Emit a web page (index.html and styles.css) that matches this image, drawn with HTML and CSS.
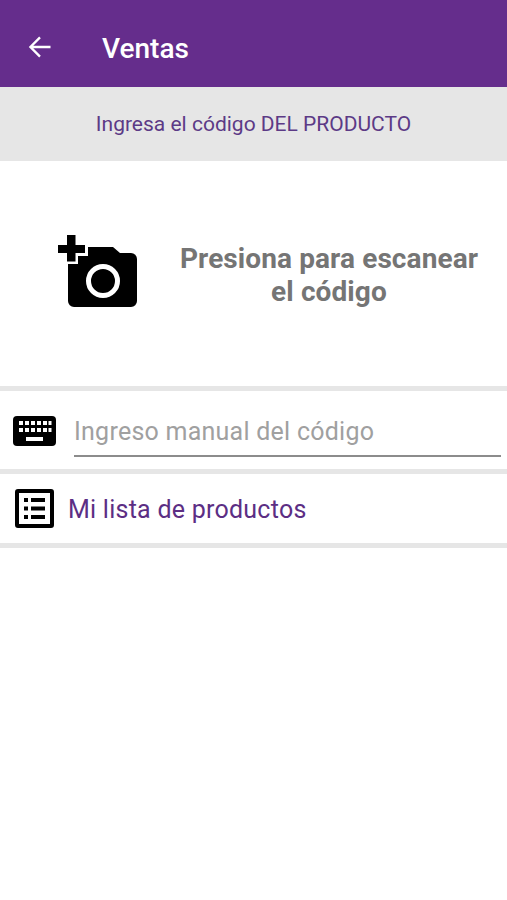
FILE: index.html
```html
<!DOCTYPE html>
<html lang="es">
<head>
<meta charset="utf-8">
<title>Ventas</title>
<link rel="stylesheet" href="styles.css">
</head>
<body>
<header class="appbar">
  <svg class="back" viewBox="0 0 24 24" aria-hidden="true"><path d="M21 12H4M12 3.800 3.800 12l8.200 8.200" fill="none" stroke="#fff" stroke-width="2"/></svg>
  <h1 class="title">Ventas</h1>
</header>
<div class="band">Ingresa el código DEL PRODUCTO</div>
<section class="scan">
  <svg class="cam" viewBox="0 0 82 74" aria-hidden="true">
    <path d="M11 29h10v-8h10v-9h25l7 6h11a6 6 0 0 1 6 6v42a6 6 0 0 1-6 6H17a6 6 0 0 1-6-6z" fill="#000"/>
    <path d="M10 0h8.500v10h9.500v8h-9.500v8.500h-8.500v-8.500H1v-8h9z" fill="#000"/>
    <circle cx="46" cy="46" r="14.500" fill="none" stroke="#fff" stroke-width="5"/>
  </svg>
  <p class="scan-text">Presiona para escanear<br>el código</p>
</section>
<div class="row row-input">
  <svg class="kbd" viewBox="0 0 43 30" aria-hidden="true">
    <rect width="43" height="30" rx="4" fill="#000"/>
    <g fill="#fff">
      <rect x="6" y="5" width="4" height="4"/><rect x="12" y="5" width="4" height="4"/><rect x="18" y="5" width="4" height="4"/><rect x="24" y="5" width="4" height="4"/><rect x="30" y="5" width="4" height="4"/><rect x="35.500" y="5" width="3" height="4"/>
      <rect x="6" y="12" width="4" height="4"/><rect x="12" y="12" width="4" height="4"/><rect x="18" y="12" width="4" height="4"/><rect x="24" y="12" width="4" height="4"/><rect x="30" y="12" width="4" height="4"/><rect x="35.500" y="12" width="3" height="4"/>
      <rect x="13" y="21" width="17" height="4"/>
    </g>
  </svg>
  <div class="field">Ingreso manual del código</div>
</div>
<div class="row row-list">
  <svg class="list" viewBox="0 0 39 39" aria-hidden="true">
    <rect x="2" y="2" width="35" height="35" rx="1" fill="none" stroke="#000" stroke-width="4"/>
    <g fill="#000">
      <rect x="9" y="9" width="4" height="4"/><rect x="16" y="9" width="14" height="4"/>
      <rect x="9" y="17.500" width="4" height="4"/><rect x="16" y="17.500" width="14" height="4"/>
      <rect x="9" y="26" width="4" height="4"/><rect x="16" y="26" width="14" height="4"/>
    </g>
  </svg>
  <span class="list-label">Mi lista de productos</span>
</div>
</body>
</html>
```
FILE: styles.css
```css
* { box-sizing: border-box; }
html, body { margin: 0; height: 100%; }
body {
  background: #fff;
  font-family: Roboto, "Liberation Sans", sans-serif;
  overflow: hidden;
}
.appbar {
  height: 87px;
  background: #652d8c;
  display: flex;
  align-items: center;
  padding: 11px 0 0 26px;
}
.back { width: 28px; height: 28px; flex: none; margin-top: -5px; }
.title {
  margin: 0 0 0 48px;
  color: #fff;
  font-size: 28px;
  font-weight: 500;
  line-height: 1;
}
.band {
  height: 74px;
  background: #e6e6e6;
  color: #5c3a86;
  font-size: 21px;
  display: flex;
  align-items: center;
  justify-content: center;
}
.scan {
  height: 230px;
  border-bottom: 5px solid #e6e6e6;
  display: flex;
  align-items: center;
  padding: 0 10px 3px 57px;
}
.cam { width: 82px; height: 74px; flex: none; }
.scan-text {
  flex: 1;
  margin: 6px 0 0;
  color: #757575;
  font-size: 28px;
  font-weight: 700;
  line-height: 33px;
  letter-spacing: 0.1px;
  text-align: center;
  padding-left: 22px;
}
.row { display: flex; align-items: center; border-bottom: 5px solid #e6e6e6; }
.row-input { height: 83px; padding: 0 6px 0 13px; }
.kbd { width: 43px; height: 30px; flex: none; margin-top: 1px; }
.field {
  flex: 1;
  margin: 2px 0 0 18px;
  height: 52px;
  border-bottom: 2px solid #8c8c8c;
  color: #a0a0a0;
  font-size: 25px;
  letter-spacing: 0.25px;
  padding-top: 12px;
}
.row-list { height: 74px; padding: 0 0 0 15px; }
.list { width: 39px; height: 39px; flex: none; }
.list-label { margin: 2px 0 0 14px; color: #5c2e84; font-size: 25px; letter-spacing: 0.25px; }
```
